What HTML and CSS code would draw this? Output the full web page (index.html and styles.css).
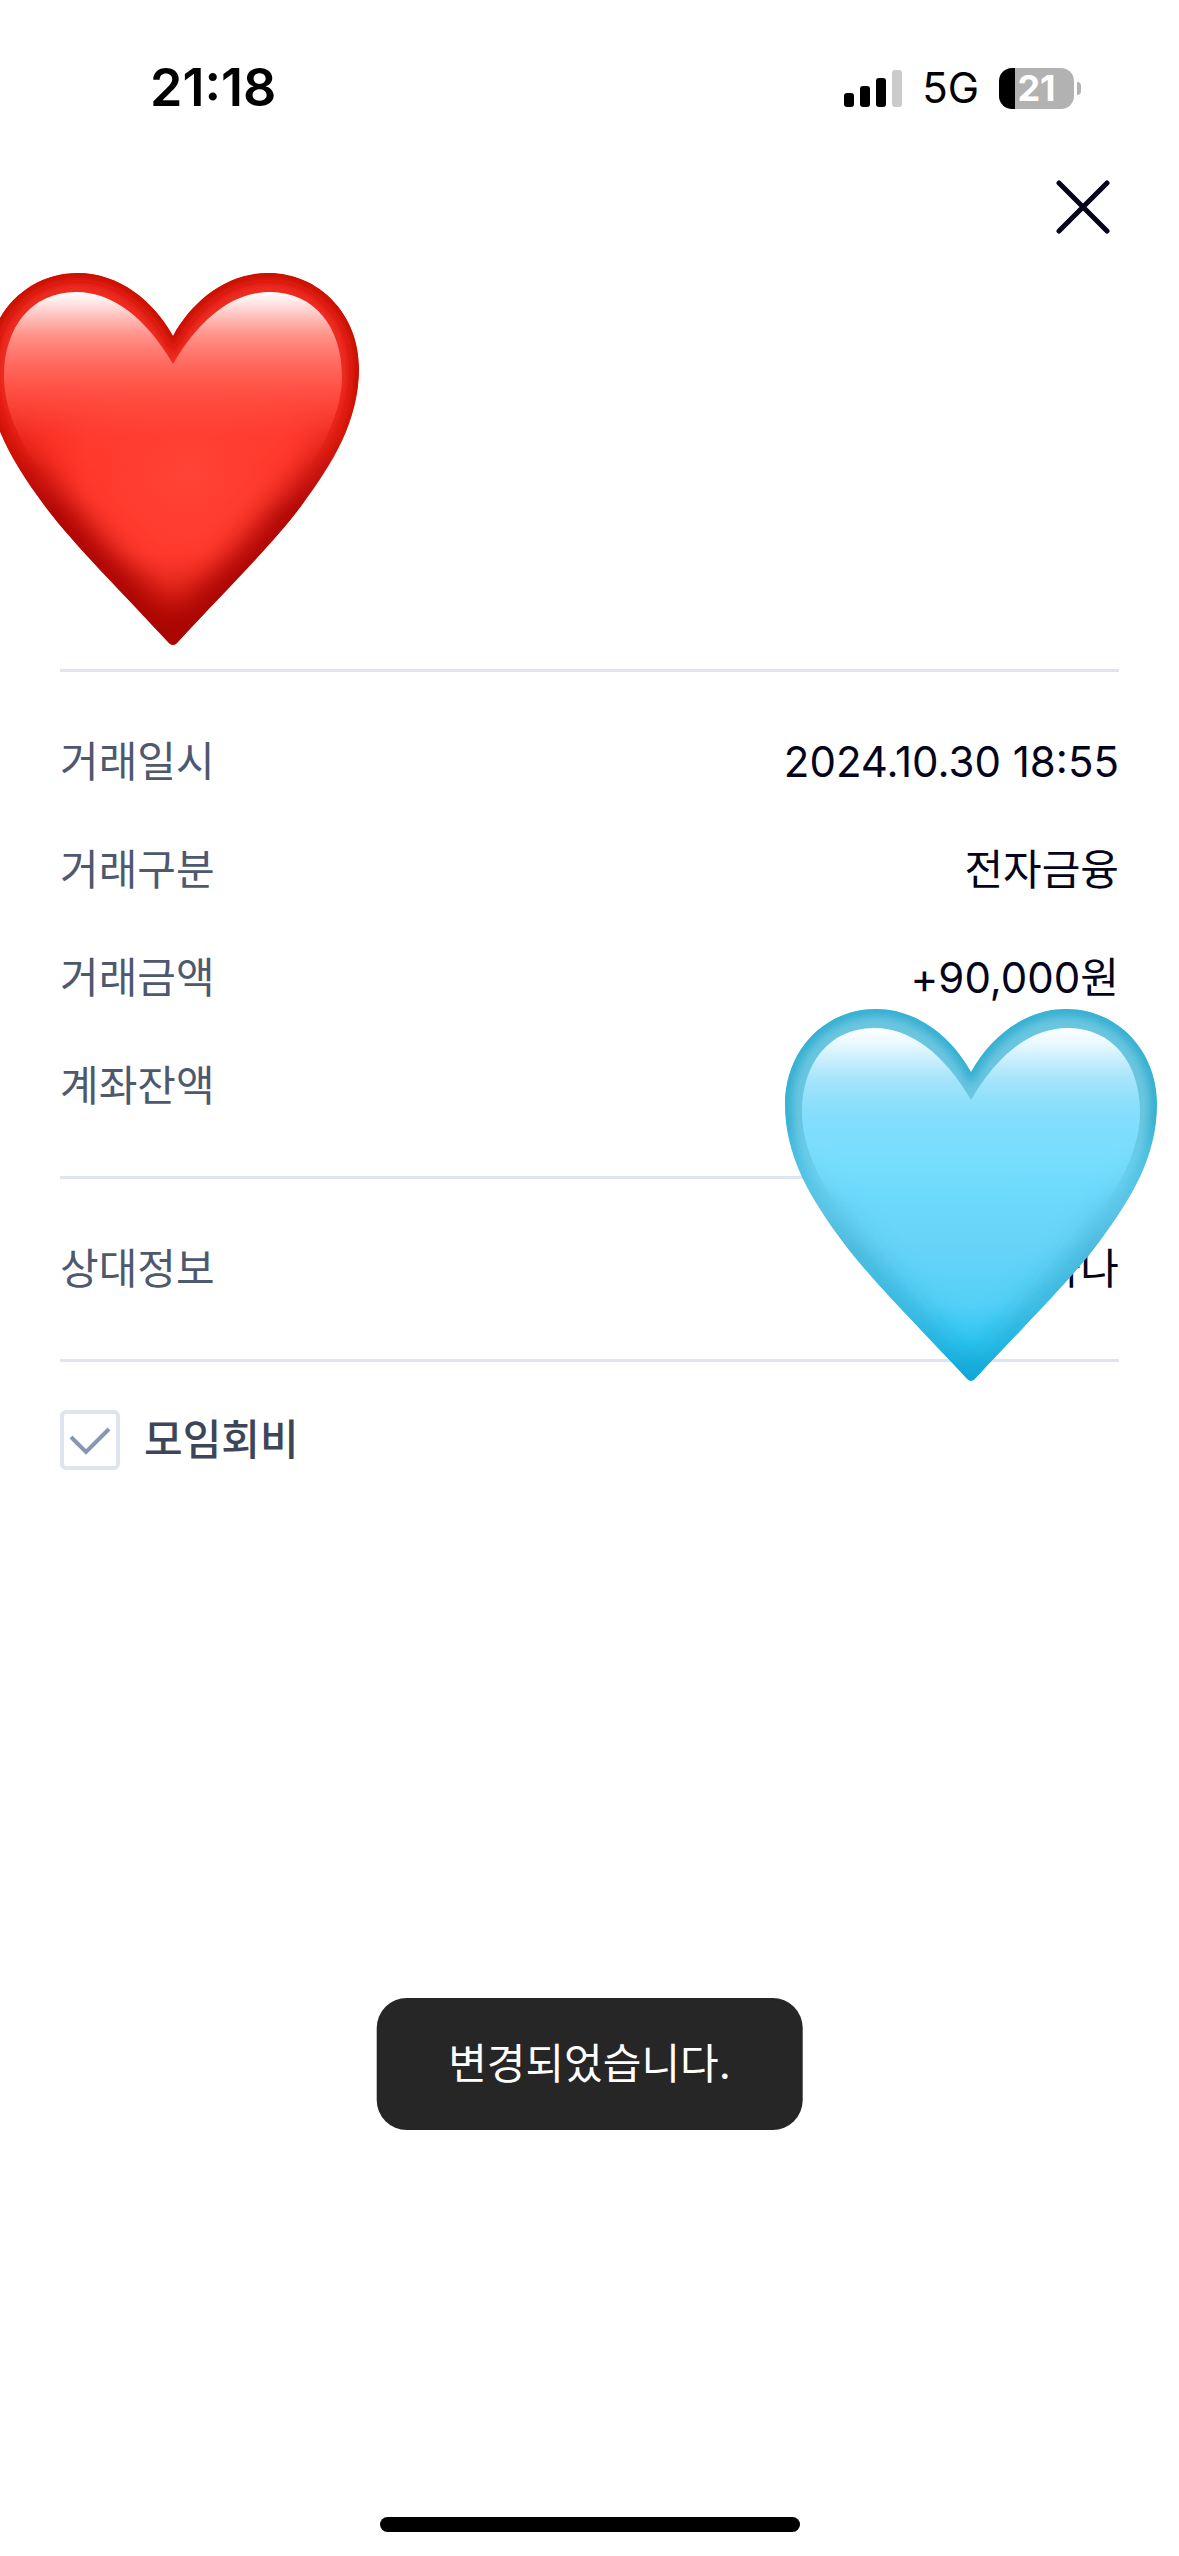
FILE: index.html
```html
<!DOCTYPE html>
<html lang="ko">
	<head>
		<meta charset="utf-8">
		<meta name="viewport" content="width=device-width, initial-scale=1">
		<title>거래내역</title>
		<link rel="stylesheet" href="styles.css">
	</head>
	<body>
		<div class="status">
			<span class="time">21:18</span>
			<div class="status-icons">
				<svg class="signal" viewBox="0 0 58 37" width="58" height="37" aria-hidden="true">
					<rect x="0" y="23" width="10" height="14" rx="3" />
					<rect x="16" y="16" width="10" height="21" rx="3" />
					<rect x="32" y="8" width="10" height="29" rx="3" />
					<rect x="48" y="0" width="10" height="37" rx="3" fill="#cbcbcb" />
				</svg>
				<span class="network">5G</span>
				<div class="battery"><span>21</span></div>
			</div>
		</div>

		<header class="top">
			<button type="button" class="close" aria-label="닫기">
				<svg viewBox="0 0 54 54" width="54" height="54" aria-hidden="true">
					<path d="M3 3 L51 51 M51 3 L3 51" fill="none" stroke="#04041a" stroke-width="5" stroke-linecap="round" />
				</svg>
			</button>
		</header>

		<main>
			<section class="summary">
				<svg class="heart heart-red" viewBox="0 0 372 372" aria-hidden="true">
					<defs>
						<path id="outer" d="M186 63 C205 28 240 0 281 0 C333 0 372 42 372 95 C372 148 346 190 315 232 C286 271 240 316 190 370 Q186 374 182 370 C132 316 86 271 57 232 C26 190 0 148 0 95 C0 42 39 0 91 0 C132 0 167 28 186 63 Z" />
						<path id="inner" d="M186 91 C213 45 246 19 283 19 C328 19 355 55 355 103 C355 180 270 260 186 345 C102 260 17 180 17 103 C17 55 44 19 89 19 C126 19 159 45 186 91 Z" />
						<clipPath id="heartClip"><use href="#outer" /></clipPath>
						<filter id="soft" x="-20%" y="-20%" width="140%" height="140%"><feGaussianBlur stdDeviation="15" /></filter>
						<filter id="softRim" x="-20%" y="-20%" width="140%" height="140%"><feGaussianBlur stdDeviation="5" /></filter>
						<linearGradient id="fadeDown" gradientUnits="userSpaceOnUse" x1="0" y1="110" x2="0" y2="240">
							<stop offset="0" stop-color="#000" />
							<stop offset="1" stop-color="#fff" />
						</linearGradient>
						<linearGradient id="fadeUp" gradientUnits="userSpaceOnUse" x1="0" y1="110" x2="0" y2="200">
							<stop offset="0" stop-color="#fff" />
							<stop offset="1" stop-color="#000" />
						</linearGradient>
						<mask id="lower"><rect width="372" height="372" fill="url(#fadeDown)" /></mask>
						<mask id="upper"><rect width="372" height="372" fill="url(#fadeUp)" /></mask>
						<radialGradient id="redBody" gradientUnits="userSpaceOnUse" cx="200" cy="195" r="190">
							<stop offset="0" stop-color="#ff4436" />
							<stop offset=".55" stop-color="#ff382b" />
							<stop offset="1" stop-color="#ee1c10" />
						</radialGradient>
						<linearGradient id="redShine" gradientUnits="userSpaceOnUse" x1="0" y1="19" x2="0" y2="165">
							<stop offset="0" stop-color="#fff" />
							<stop offset=".08" stop-color="#fff" stop-opacity=".86" />
							<stop offset=".3" stop-color="#ffb5ae" stop-opacity=".7" />
							<stop offset=".6" stop-color="#ff8078" stop-opacity=".4" />
							<stop offset="1" stop-color="#ff5a50" stop-opacity="0" />
						</linearGradient>
						<linearGradient id="redTip" gradientUnits="userSpaceOnUse" x1="0" y1="280" x2="0" y2="372">
							<stop offset="0" stop-color="#a80800" stop-opacity="0" />
							<stop offset="1" stop-color="#a80800" stop-opacity=".7" />
						</linearGradient>
					</defs>
					<g clip-path="url(#heartClip)">
						<use href="#outer" fill="url(#redBody)" />
						<g mask="url(#lower)"><use href="#outer" fill="none" stroke="#a40500" stroke-width="40" filter="url(#soft)" /></g>
						<rect width="372" height="372" fill="url(#redTip)" />
						<g mask="url(#upper)">
							<use href="#outer" fill="#ee2c20" />
							<use href="#outer" fill="none" stroke="#c90e04" stroke-width="16" filter="url(#softRim)" />
							<use href="#inner" fill="#ff3f32" />
						</g>
						<use href="#inner" fill="url(#redShine)" />
					</g>
				</svg>
			</section>

			<dl class="details">
				<div class="row"><dt>거래일시</dt><dd>2024.10.30 18:55</dd></div>
				<div class="row"><dt>거래구분</dt><dd>전자금융</dd></div>
				<div class="row"><dt>거래금액</dt><dd>+90,000원</dd></div>
				<div class="row"><dt>계좌잔액</dt><dd></dd></div>
			</dl>

			<dl class="details partner">
				<div class="row"><dt>상대정보</dt><dd>하나</dd></div>
				<svg class="heart heart-blue" viewBox="0 0 372 372" aria-hidden="true">
					<defs>
						<linearGradient id="blueBody" gradientUnits="userSpaceOnUse" x1="0" y1="60" x2="0" y2="372">
							<stop offset="0" stop-color="#7bdfff" />
							<stop offset=".3" stop-color="#6fdcff" />
							<stop offset=".55" stop-color="#68d4f7" />
							<stop offset=".75" stop-color="#55d0f7" />
							<stop offset=".88" stop-color="#30c6f2" />
							<stop offset="1" stop-color="#0baadb" />
						</linearGradient>
						<linearGradient id="blueShine" gradientUnits="userSpaceOnUse" x1="0" y1="19" x2="0" y2="190">
							<stop offset="0" stop-color="#fff" />
							<stop offset=".1" stop-color="#f3fbff" stop-opacity=".9" />
							<stop offset=".28" stop-color="#bfe8fa" stop-opacity=".75" />
							<stop offset=".5" stop-color="#98dff8" stop-opacity=".45" />
							<stop offset="1" stop-color="#86dcf8" stop-opacity="0" />
						</linearGradient>
						<linearGradient id="blueEdge" gradientUnits="userSpaceOnUse" x1="0" y1="200" x2="0" y2="372">
							<stop offset="0" stop-color="#3a9fbd" />
							<stop offset="1" stop-color="#10a5d4" />
						</linearGradient>
					</defs>
					<g clip-path="url(#heartClip)">
						<use href="#outer" fill="url(#blueBody)" />
						<g mask="url(#lower)"><use href="#outer" fill="none" stroke="url(#blueEdge)" stroke-width="18" filter="url(#soft)" /></g>
						<g mask="url(#upper)">
							<use href="#outer" fill="#6cc6e0" />
							<use href="#outer" fill="none" stroke="#33aed0" stroke-width="14" filter="url(#softRim)" />
							<use href="#inner" fill="#74ddff" />
						</g>
						<use href="#inner" fill="url(#blueShine)" />
					</g>
				</svg>
			</dl>

			<div class="memo">
				<input type="checkbox" id="fee" checked>
				<label for="fee">모임회비</label>
			</div>
		</main>

		<div class="toast" role="status">변경되었습니다.</div>
		<div class="home-bar"></div>
	</body>
</html>
```

FILE: styles.css
```css
* {
	box-sizing: border-box;
}

body {
	margin: 0;
	min-height: 100vh;
	overflow-x: hidden;
	background-color: #ffffff;
	color: #04041a;
	font-family: Inter, "Noto Sans CJK KR", sans-serif;
	font-size: 42px;
	line-height: 60px;
}

/* status bar */

.status {
	display: flex;
	justify-content: space-between;
	align-items: center;
	padding: 58px 105px 23px 150px;
	color: #000000;
}

.time {
	font-size: 52px;
	font-weight: 600;
}

.status-icons {
	display: flex;
	align-items: center;
	gap: 20px;
}

.network {
	font-size: 42px;
}

.battery {
	position: relative;
	width: 75px;
	height: 41px;
	border-radius: 13px;
	background: linear-gradient(to right, #000000 16px, #b2b2b2 16px);
	color: #ffffff;
	font-size: 36px;
	font-weight: 700;
	line-height: 41px;
	text-align: center;
}

.battery::after {
	content: "";
	position: absolute;
	left: 78px;
	top: 14px;
	width: 4px;
	height: 13px;
	border-radius: 0 4px 4px 0;
	background-color: #b2b2b2;
}

/* close button */

.top {
	display: flex;
	justify-content: flex-end;
	padding: 39px 69px;
}

.close {
	display: flex;
	padding: 0;
	border: none;
	background: none;
	cursor: pointer;
}

/* transaction */

main {
	padding: 0 60px;
}

.summary {
	position: relative;
	height: 396px;
}

.heart {
	position: absolute;
	width: 372px;
	height: 372px;
}

.heart-red {
	left: -73px;
	bottom: 24px;
}

.heart-blue {
	right: -38px;
	bottom: -22px;
}

.details {
	margin: 0;
	padding: 36px 0;
	border-top: 3px solid #dfe4ef;
}

.partner {
	position: relative;
	border-bottom: 3px solid #dfe4ef;
}

.row {
	display: flex;
	justify-content: space-between;
	padding: 24px 0;
}

.row dt {
	color: #4e586e;
}

.row dd {
	margin: 0;
	text-align: right;
}

.memo {
	display: flex;
	align-items: center;
	gap: 24px;
	padding: 48px 0;
}

.memo input {
	appearance: none;
	width: 60px;
	height: 60px;
	margin: 0;
	border: 4px solid #dfe4ef;
	border-radius: 6px;
	background-color: #ffffff;
}

.memo input:checked {
	background-image: url("data:image/svg+xml,%3Csvg xmlns='http://www.w3.org/2000/svg' viewBox='0 0 52 52'%3E%3Cpath d='M7 23L22 38L45 15' fill='none' stroke='%238796b4' stroke-width='4'/%3E%3C/svg%3E");
}

.memo label {
	color: #3d4659;
	font-weight: 500;
}

.toast {
	position: fixed;
	left: 50%;
	bottom: 426px;
	transform: translateX(-50%);
	padding: 36px 72px;
	border-radius: 30px;
	background-color: #262626;
	color: #ffffff;
	white-space: nowrap;
}

.home-bar {
	position: fixed;
	left: 50%;
	bottom: 24px;
	transform: translateX(-50%);
	width: 420px;
	height: 15px;
	border-radius: 8px;
	background-color: #000000;
}
```
